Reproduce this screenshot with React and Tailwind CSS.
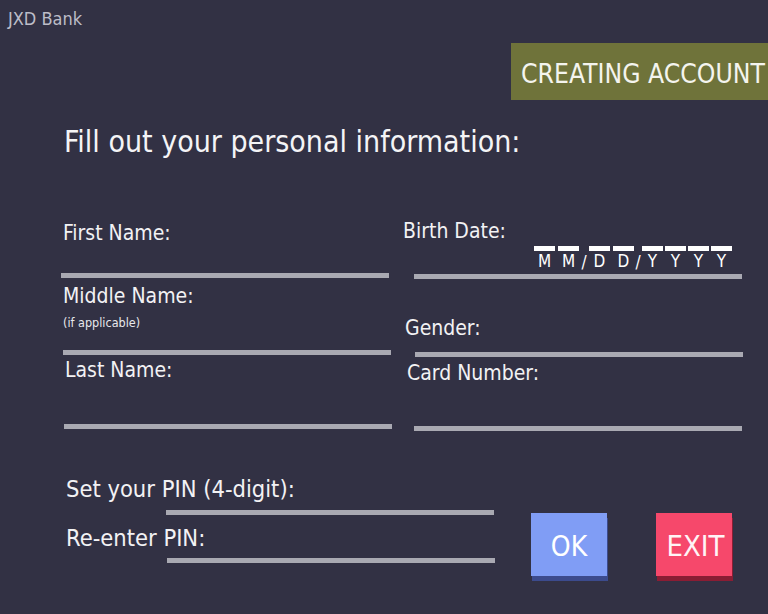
import React from "react";

const Line = ({ cls }) => <div className={`h-[5px] w-[328px] bg-[#a9a9b2] ${cls}`} />;

const Label = ({ cls, children }) => (
  <div className={`text-[21px] leading-[21px] text-[#f2f2f4] whitespace-nowrap ${cls}`}>{children}</div>
);

const Cell = ({ ch }) => (
  <div className="w-[21px] flex flex-col items-center">
    <div className="h-[5px] w-[21px] bg-white" />
    <div className="mt-[2px] text-[17px] leading-[17px] text-white">{ch}</div>
  </div>
);

const Slash = () => (
  <div className="w-[4px] flex flex-col items-center">
    <div className="h-[5px]" />
    <div className="mt-[3px] flex justify-center w-[4px] text-[17px] leading-[17px] text-white">
      <span>/</span>
    </div>
  </div>
);

export default function App() {
  return (
    <div className="w-[768px] h-[614px] overflow-hidden bg-[#323144] font-['DejaVu_Sans_Condensed','DejaVu_Sans',sans-serif] [font-stretch:condensed] flex flex-col">
      <div className="pt-[10px] pl-[8px] text-[18px] leading-[18px] text-[#bdbdc8]">JXD Bank</div>
      <div className="self-end mt-[15px] w-[257px] h-[57px] bg-[#6f733a] pl-[10px] pt-[18px] text-[26.3px] leading-[26px] text-[#f4f4ee] whitespace-nowrap">
        CREATING ACCOUNT
      </div>
      <h1 className="mt-[27px] ml-[64px] text-[30px] leading-[30px] text-[#f4f4f6]">
        Fill out your personal information:
      </h1>

      <div className="flex items-start">
        <div className="ml-[61px] w-[341px] flex flex-col">
          <Label cls="mt-[66px] ml-[2px]">First Name:</Label>
          <Line cls="mt-[29px]" />
          <Label cls="mt-[8px] ml-[2px]">Middle Name:</Label>
          <div className="mt-[9px] ml-[2px] text-[12.5px] leading-[13px] text-[#e8e8ec]">(if applicable)</div>
          <Line cls="mt-[21px] ml-[2px]" />
          <Label cls="mt-[5px] ml-[4px]">Last Name:</Label>
          <Line cls="mt-[43px] ml-[3px]" />
        </div>
        <div className="w-[366px] flex flex-col">
          <Label cls="mt-[64px] ml-[1px]">Birth Date:</Label>
          <div className="mt-[4px] ml-[132px] flex">
            <div className="flex gap-[3px]">
              <Cell ch="M" />
              <Cell ch="M" />
            </div>
            <div className="mx-[3px] flex"><Slash /></div>
            <div className="flex gap-[3px]">
              <Cell ch="D" />
              <Cell ch="D" />
            </div>
            <div className="mx-[2px] flex"><Slash /></div>
            <div className="flex gap-[2px]">
              <Cell ch="Y" />
              <Cell ch="Y" />
              <Cell ch="Y" />
              <Cell ch="Y" />
            </div>
          </div>
          <Line cls="mt-[3px] ml-[12px]" />
          <Label cls="mt-[39px] ml-[3px]">Gender:</Label>
          <Line cls="mt-[13px] ml-[13px]" />
          <Label cls="mt-[6px] ml-[5px]">Card Number:</Label>
          <Line cls="mt-[42px] ml-[12px]" />
        </div>
      </div>

      <div className="flex items-start">
        <div className="w-[495px] flex flex-col">
          <div className="mt-[46px] ml-[66px] text-[23.5px] leading-[24px] text-[#f2f2f4] whitespace-nowrap">Set your PIN (4-digit):</div>
          <Line cls="mt-[9px] ml-[166px]" />
          <div className="mt-[11px] ml-[66px] text-[23.5px] leading-[24px] text-[#f2f2f4] whitespace-nowrap">Re-enter PIN:</div>
          <Line cls="mt-[8px] ml-[167px]" />
        </div>
        <button className="mt-[82px] ml-[36px] w-[76px] h-[63px] bg-[#809df5] shadow-[1px_5px_0_#3c4b8d] flex items-center justify-center pt-[4px] text-[28px] leading-[28px] text-white">
          OK
        </button>
        <button className="mt-[82px] ml-[49px] w-[76px] h-[63px] bg-[#f6486b] shadow-[1px_5px_0_#8a1d34] flex items-center justify-center pt-[4px] pl-[3px] text-[29px] leading-[29px] text-[#fff4f6]">
          EXIT
        </button>
      </div>
    </div>
  );
}
